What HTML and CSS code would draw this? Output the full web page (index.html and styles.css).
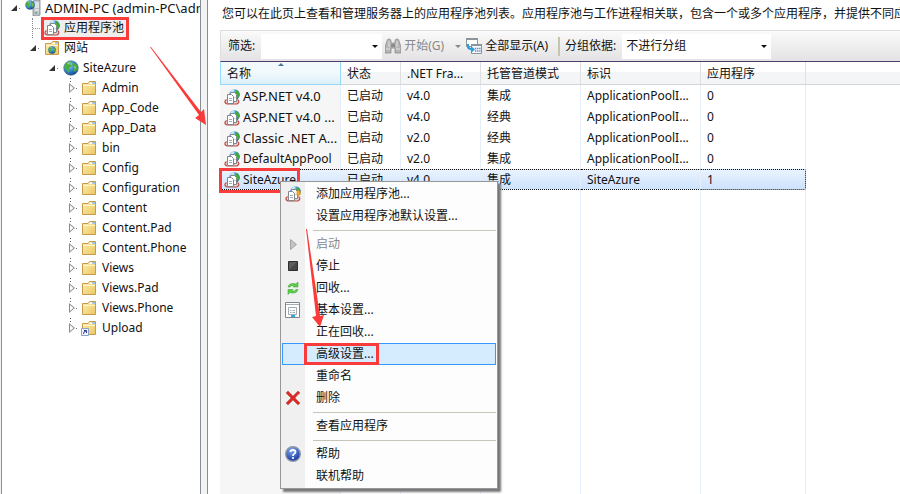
FILE: index.html
```
<!DOCTYPE html>
<html lang="zh-CN">
<head>
<meta charset="utf-8">
<title>应用程序池</title>
<link rel="stylesheet" href="styles.css">
</head>
<body>
<svg class="defs" aria-hidden="true">
  <defs>
    <linearGradient id="gold" x1="0" y1="0" x2="1" y2="1"><stop offset="0" stop-color="#fff0ac"/><stop offset="1" stop-color="#eac665"/></linearGradient>
    <radialGradient id="sea" cx=".35" cy=".3" r=".8"><stop offset="0" stop-color="#a5dcff"/><stop offset=".5" stop-color="#3388d8"/><stop offset="1" stop-color="#143880"/></radialGradient>
    <radialGradient id="helpfill" cx=".4" cy=".25" r=".8"><stop offset="0" stop-color="#7fa8ee"/><stop offset="1" stop-color="#102f9c"/></radialGradient>
    <symbol id="globe" viewBox="0 0 16 16"><circle cx="8" cy="8" r="7.3" fill="url(#sea)" stroke="#456c9c" stroke-width=".6"/><path d="M2 4Q5 1 8 1L7 4 9 6 6 8 7 11 5 13 3 9 1 8ZM10 2L14 5 15 9 12 12 10 10 12 7 9 5Z" fill="#4cac3e"/><path d="M4 3L7 2 6 5ZM11 6L13 7 12 9Z" fill="#a5dd7d"/></symbol>
    <symbol id="folder" viewBox="0 0 16 16"><path d="M1.500 3.500H7L8.500 1.500H14.500V14.500H1.500Z" fill="url(#gold)" stroke="#c69c4c"/><path d="M9 2.500H14V4H8Z" fill="#fff"/><path d="M11 2.500H14V3.500H11Z" fill="#4c91da"/><path d="M2 5.500H14" stroke="#fff5c7"/></symbol>
    <symbol id="pool" viewBox="0 0 16 16"><circle cx="10.500" cy="5.500" r="5.200" fill="url(#sea)"/><path d="M12 1Q16 3 15.500 7L13 10 11 8 13 6 11 4Z" fill="#3fae35"/><path d="M6 3Q8 0 11 .5L9 3Z" fill="#cfeaf2"/><path d="M2.500 10.500Q-1 13 3 15H13Q16.500 13 13.500 10.500" fill="#e9d3d0" stroke="#c04a42" stroke-width="1.200"/><path d="M6.500 3.500H10.500L12.500 5.500V12.500H6.500Z" fill="#fff" stroke="#7f8890"/><path d="M3.500 5.500H7.500L9.500 7.500V14.500H3.500Z" fill="#fff" stroke="#7f8890"/><path d="M5 9.500H8M5 11.500H8M10.500 8.500H11.500" stroke="#a3abb3"/></symbol>
    <symbol id="server" viewBox="0 0 16 16"><path d="M8 1L10 0H15V15L13 16H8Z" fill="#bcc5cc" stroke="#6d7882" stroke-width=".7"/><path d="M10 3H14M10 5H14M10 7H14M10 10H14" stroke="#fff"/><path d="M10 13H12" stroke="#3d9e31"/><use href="#globe" width="10" height="10" x="0" y="0"/></symbol>
  </defs>
</svg>
<main class="window">
  <nav class="tree" aria-label="连接">
    <ul>
      <li class="node root"><span class="toggle open"></span><svg class="icon"><use href="#server"/></svg><span class="caps">ADMIN-PC (admin-PC\administrator)</span></li>
      <li class="node level1 leaf"><span class="branch"></span><a class="marked" href="#pools"><svg class="icon"><use href="#pool"/></svg><span>应用程序池</span></a></li>
      <li class="node level1"><span class="toggle open"></span><svg class="icon"><use href="#folder"/><use href="#globe" x="4" y="6" width="8" height="8"/></svg><span>网站</span></li>
      <li class="node level2"><span class="toggle open"></span><svg class="icon"><use href="#globe"/></svg><span>SiteAzure</span></li>
      <li class="node level3"><span class="toggle"></span><svg class="icon"><use href="#folder"/></svg><span>Admin</span></li>
      <li class="node level3"><span class="toggle"></span><svg class="icon"><use href="#folder"/></svg><span>App_Code</span></li>
      <li class="node level3"><span class="toggle"></span><svg class="icon"><use href="#folder"/></svg><span>App_Data</span></li>
      <li class="node level3"><span class="toggle"></span><svg class="icon"><use href="#folder"/></svg><span>bin</span></li>
      <li class="node level3"><span class="toggle"></span><svg class="icon"><use href="#folder"/></svg><span>Config</span></li>
      <li class="node level3"><span class="toggle"></span><svg class="icon"><use href="#folder"/></svg><span>Configuration</span></li>
      <li class="node level3"><span class="toggle"></span><svg class="icon"><use href="#folder"/></svg><span>Content</span></li>
      <li class="node level3"><span class="toggle"></span><svg class="icon"><use href="#folder"/></svg><span>Content.Pad</span></li>
      <li class="node level3"><span class="toggle"></span><svg class="icon"><use href="#folder"/></svg><span>Content.Phone</span></li>
      <li class="node level3"><span class="toggle"></span><svg class="icon"><use href="#folder"/></svg><span>Views</span></li>
      <li class="node level3"><span class="toggle"></span><svg class="icon"><use href="#folder"/></svg><span>Views.Pad</span></li>
      <li class="node level3"><span class="toggle"></span><svg class="icon"><use href="#folder"/></svg><span>Views.Phone</span></li>
      <li class="node level3"><span class="toggle"></span><svg class="icon" viewBox="0 0 16 16"><use href="#folder"/><path d="M.5 8.500H7.500V15.500H.5Z" fill="#f2f3ff" stroke="#8fa0c5"/><path d="M2.500 14Q2.500 11 5 11M3 10.500H5.500V13" fill="none" stroke="#2b3896"/></svg><span>Upload</span></li>
    </ul>
  </nav>
  <section class="content" id="pools">
    <p class="intro">您可以在此页上查看和管理服务器上的应用程序池列表。应用程序池与工作进程相关联，包含一个或多个应用程序，并提供不同应用程序之间的隔离。</p>
    <form class="toolbar">
      <label for="filter">筛选:</label>
      <span class="combo filter"><input id="filter" type="text"></span>
      <button class="tool go" type="button" disabled><svg class="icon" viewBox="0 0 16 16"><path d="M2 3Q2 1 4 1T6 3V5H10V3Q10 1 12 1T14 3L16 9V15H10V10H6V15H0V9Z" fill="#b5b5b5" stroke="#8c8c8c" stroke-width=".8"/><path d="M4 3V9M12 3V9M1 11H5M11 11H15" stroke="#e2e2e2"/><path d="M6 6H10V9H6Z" fill="#8c8c8c"/></svg>开始(G)<span class="arrow"></span></button>
      <button class="tool" type="button"><svg class="icon" viewBox="0 0 16 16"><path d="M.5 .5H11.500V8.500H.5Z" fill="#fff" stroke="#8b969c"/><path d="M0 1H12" stroke="#8b969c" stroke-width="2"/><path d="M5.500 6.500H15.500V15.500H5.500Z" fill="#f4f7fa" stroke="#8b969c"/><path d="M5 7H16" stroke="#8b969c" stroke-width="2"/><path d="M9 10.500H14.500M9 13H14.500" stroke="#6482b0" stroke-width="1.300" stroke-dasharray="1.300 .8"/><path d="M1 6Q0 12 5 12V15L9 11.500 5 8V10Q3 10 3 6Z" fill="#2b9ddb"/></svg>全部显示(A)</button>
      <span class="divider"></span>
      <label for="group">分组依据:</label>
      <span class="combo group"><select id="group"><option>不进行分组</option></select></span>
    </form>
    <table class="pools">
      <colgroup><col class="name"><col class="state"><col class="version"><col class="mode"><col class="identity"><col class="apps"><col></colgroup>
      <thead><tr><th class="sorted">名称</th><th>状态</th><th>.NET Fra...</th><th>托管管道模式</th><th>标识</th><th>应用程序</th><th></th></tr></thead>
      <tbody>
        <tr><td class="caps"><svg class="icon"><use href="#pool"/></svg>ASP.NET v4.0</td><td>已启动</td><td>v4.0</td><td>集成</td><td>ApplicationPoolI...</td><td>0</td><td></td></tr>
        <tr><td class="caps"><svg class="icon"><use href="#pool"/></svg>ASP.NET v4.0 ...</td><td>已启动</td><td>v4.0</td><td>经典</td><td>ApplicationPoolI...</td><td>0</td><td></td></tr>
        <tr><td class="caps"><svg class="icon"><use href="#pool"/></svg>Classic .NET A...</td><td>已启动</td><td>v2.0</td><td>经典</td><td>ApplicationPoolI...</td><td>0</td><td></td></tr>
        <tr><td><svg class="icon"><use href="#pool"/></svg>DefaultAppPool</td><td>已启动</td><td>v2.0</td><td>集成</td><td>ApplicationPoolI...</td><td>0</td><td></td></tr>
        <tr class="selected"><td><svg class="icon"><use href="#pool"/></svg>SiteAzure</td><td>已启动</td><td>v4.0</td><td>集成</td><td>SiteAzure</td><td>1</td><td></td></tr>
        <tr class="rest"><td></td><td></td><td></td><td></td><td></td><td></td><td></td></tr>
      </tbody>
    </table>
  </section>
  <div class="row-mark"></div>
  <menu class="context">
    <li><button type="button"><svg class="icon" viewBox="0 0 16 16"><use href="#pool"/><path d="M13.500 4V10M10.500 7H16M11.500 5L15.500 9M15.500 5L11.500 9" stroke="#f5a93a" stroke-width=".9"/></svg>添加应用程序池...</button></li>
    <li><button type="button">设置应用程序池默认设置...</button></li>
    <li class="sep"></li>
    <li><button type="button" disabled><svg class="icon" viewBox="0 0 16 16"><path d="M5.500 3.500L11.500 8.500 5.500 13.500Z" fill="#c4c4c4" stroke="#a3a3a3"/></svg>启动</button></li>
    <li><button type="button"><svg class="icon" viewBox="0 0 16 16"><path d="M3.500 3.500H12.500V12.500H3.500Z" fill="#5c5c5c" stroke="#2d2d2d"/><path d="M4 12L12 4V12Z" fill="#474747"/></svg>停止</button></li>
    <li><button type="button"><svg class="icon" viewBox="0 0 16 16"><path d="M3 7Q4 3 9 3.500L11 4 13 2V7H8L9.500 5.500Q6 5 5 7ZM13 9.500Q12 13.500 7 13L5 12.500 3 14.500V9.500H8L6.500 11Q10 11.500 11 9.500Z" fill="#5bd044" stroke="#319a2d" stroke-width=".5"/></svg>回收...</button></li>
    <li><button type="button"><svg class="icon" viewBox="0 0 16 16"><path d="M.5 .5H14.500V15.500H.5Z" fill="#fff" stroke="#7c8792"/><path d="M1 2.500H14M3.500 5.500H11.500V12.500H3.500ZM5 8.500H6.500M7.500 8.500H10M5 10.500H6.500M7.500 10.500H10" fill="none" stroke="#a3acb4"/><path d="M6 14H10" stroke="#31aad9" stroke-width="2"/></svg>基本设置...</button></li>
    <li><button type="button">正在回收...</button></li>
    <li><button class="active" type="button"><span class="marked">高级设置...</span></button></li>
    <li><button type="button">重命名</button></li>
    <li><button type="button"><svg class="icon" viewBox="0 0 16 16"><path d="M1 3L3 1Q6 4 8 6Q11 3 13 1L15 3Q12 5 10 8L15 13 13 15 8 10 3 15 1 13 6 8Z" fill="#dc2926" stroke="#b45a56" stroke-width=".6"/></svg>删除</button></li>
    <li class="sep"></li>
    <li><button type="button">查看应用程序</button></li>
    <li class="sep"></li>
    <li><button type="button"><svg class="icon" viewBox="0 0 16 16"><circle cx="8" cy="8" r="7.300" fill="url(#helpfill)" stroke="#8d98aa" stroke-width="1.400"/><path d="M5.500 6Q5.500 4 8 4Q10.500 4 10.500 6Q10.500 7 9 8Q8 8.500 8 10" fill="none" stroke="#fff" stroke-width="1.800"/><circle cx="8" cy="12" r="1.100" fill="#fff"/></svg>帮助</button></li>
    <li><button type="button">联机帮助</button></li>
  </menu>
  <svg class="pointer first" viewBox="0 0 58 80" aria-hidden="true"><path d="M0 0L49 68L45 71L56 78L54 62L51 65L1 0Z" fill="#fa3b3b"/></svg>
  <svg class="pointer second" viewBox="0 0 20 100" aria-hidden="true"><path d="M0 0L10 87L6 88L14 98L18 86L14 87L1 0Z" fill="#fa3b3b"/></svg>
</main>
</body>
</html>
```

FILE: styles.css
```
* { box-sizing: border-box; }
body { margin: 0; font: 12px/20px "Noto Sans", "Noto Sans CJK SC", sans-serif; color: #111; background: #fff; }
ul, menu { margin: 0; padding: 0; list-style: none; }
button, input, select { font: inherit; color: inherit; border: 0; padding: 0; background: none; }
.defs { position: absolute; width: 0; height: 0; }
.icon { width: 16px; height: 16px; flex: none; }
.caps { font-size: 13px; }

.window { position: relative; display: grid; grid-template-columns: 207px minmax(0, 1fr); height: 100vh; overflow: hidden; background: #f3f3f3; }

.tree { margin: 0 6px 0 1px; padding-left: 8px; border: solid #888e95; border-width: 0 1px; background: #fff; overflow: hidden; }
.tree ul { margin-top: -2px; }
.node { display: flex; align-items: center; height: 20px; white-space: nowrap; }
.node .icon { margin: 0 4px 0 5px; }
.level1 { padding-left: 19px; }
.level2 { padding-left: 38px; }
.level3 { padding-left: 57px; }

/* Expander arrows with the dotted guide lines */
.toggle, .branch { position: relative; flex: none; width: 10px; height: 20px; }
.toggle { background: linear-gradient(#555, #555) 3px 0 / 1px 1px no-repeat, linear-gradient(#555, #555) 3px 3px / 1px 1px no-repeat, linear-gradient(#777, #777) 9px 10px / 1px 1px no-repeat; }
.toggle::after { content: ""; position: absolute; left: 2px; top: 5px; width: 6px; height: 10px; background: #8a8a8a; clip-path: polygon(0 0, 100% 50%, 0 100%); }
.toggle::before { content: ""; position: absolute; z-index: 1; left: 3px; top: 7px; width: 4px; height: 6px; background: #fff; clip-path: polygon(0 0, 90% 50%, 0 100%); }
.toggle.open { background: linear-gradient(#777, #777) 9px 10px / 1px 1px no-repeat; }
.toggle.open::before { content: none; }
.toggle.open::after { left: 1px; top: 7px; width: 6px; height: 6px; background: #333; clip-path: polygon(100% 0, 100% 100%, 0 100%); }
.level3 .icon { margin: 0 5px 0 4px; }
.branch { margin-left: 3px; border-left: 1px dotted #888; background: repeating-linear-gradient(90deg, #999 0 1px, transparent 1px 2px) 0 10px / 8px 1px no-repeat; }

.node a { display: flex; align-items: center; height: 23px; color: inherit; text-decoration: none; background: #eee; }
.marked { border: 3px solid #fa3b3b; }
.node a.marked { margin-left: -1px; padding-right: 2px; }
.node a .icon { margin: 0 4px 0 0; }

.content { display: flex; flex-direction: column; min-width: 0; padding-left: 12px; border-left: 1px solid #888e95; background: #fff; }
.intro { margin: 0; height: 30px; padding: 4px 0 0 2px; white-space: nowrap; overflow: hidden; }
.toolbar { display: flex; align-items: center; flex: none; height: 32px; padding-left: 7px; white-space: nowrap; border: solid #ddd; border-width: 1px 0 0 1px; border-bottom: 1px solid #4c3c6e; background: linear-gradient(#fafafa, #e4e2e4); }
.combo { position: relative; display: flex; height: 25px; margin-left: 6px; background: #fff; }
.combo::after, .arrow { content: ""; border: 3px solid transparent; border-top-color: #111; border-bottom: 0; }
.combo::after { position: absolute; right: 4px; top: 11px; }
.filter { width: 121px; }
.group { width: 149px; }
.combo input, .combo select { width: 100%; appearance: none; padding-left: 4px; outline: 0; }
.tool { display: flex; align-items: center; gap: 3px; margin-left: 3px; }
.tool:disabled { color: #888; }
.arrow { margin: 0 2px 0 8px; border-top-color: #888; }
.divider { width: 2px; height: 19px; margin: 0 5px 0 10px; background: #c5c5ae; }

.pools { flex: 1; width: 100%; table-layout: fixed; border-collapse: separate; border-spacing: 0; line-height: 20px; }
.name { width: 121px; }
.state { width: 60px; }
.version { width: 80px; }
.mode { width: 100px; }
.identity { width: 120px; }
.apps { width: 105px; }
.pools th { height: 23px; padding: 2px 6px 0; text-align: left; font-weight: normal; white-space: nowrap; border-right: 1px solid #dedfe1; border-bottom: 1px solid #d5d5d5; background: linear-gradient(#fff 45%, #f4f5f6 46%); }
.pools th:last-child, .pools td:last-child { border-right: 0; }
.pools .sorted { position: relative; border: 1px solid #96d9f9; border-top: 0; background: linear-gradient(#f3fafd 45%, #dceff8); }
.sorted::after { content: ""; position: absolute; left: 57px; top: 1px; border: 3px solid transparent; border-bottom-color: #4b7896; border-top: 0; }
.pools td { height: 21px; padding: 1px 6px 0; white-space: nowrap; border-right: 1px solid #e5eefb; }
.pools td:first-child { padding: 1px 0 0 4px; background: #f6f6f6; }
.pools td .icon { margin-right: 3px; vertical-align: -4px; }
.pools tr:not(.rest) td { line-height: 20px; }
.pools .selected td:not(:last-child) { line-height: 18px; border-top: 1px dotted #111; border-bottom: 1px dotted #111; background: linear-gradient(#eaf3ff, #cce2fc); }
.pools .selected td:nth-child(6) { border-right: 1px dotted #111; border-radius: 0 2px 2px 0; }
.pools .rest td { height: auto; }

.row-mark { position: absolute; left: 219px; top: 168px; width: 81px; height: 25px; border: 3px solid #fa3b3b; }
.context { position: absolute; left: 280px; top: 181px; width: 218px; padding: 1px; border: 1px solid #979797; background: linear-gradient(90deg, #f0f0f0 24px, #fdfdfd 24px); box-shadow: 3px 3px 2px #777; }
.context li { height: 22px; }
.context button { position: relative; display: flex; align-items: center; width: 100%; height: 22px; padding-left: 34px; white-space: nowrap; }
.context .icon { position: absolute; left: 3px; top: 3px; }
.context button:disabled { color: #888; }
.context .sep { height: 6px; margin: 3px 0 -3px 31px; border-top: 1px solid #c5c5b9; }
.context .active { border: 1px solid #3399ff; background: #d5ecff; }
.context .active .marked { height: 22px; margin-left: -13px; padding: 0 2px 0 9px; line-height: 16px; }
.pointer { position: absolute; }
.first { left: 150px; top: 47px; width: 58px; height: 80px; }
.second { left: 306px; top: 229px; width: 20px; height: 100px; }
```
